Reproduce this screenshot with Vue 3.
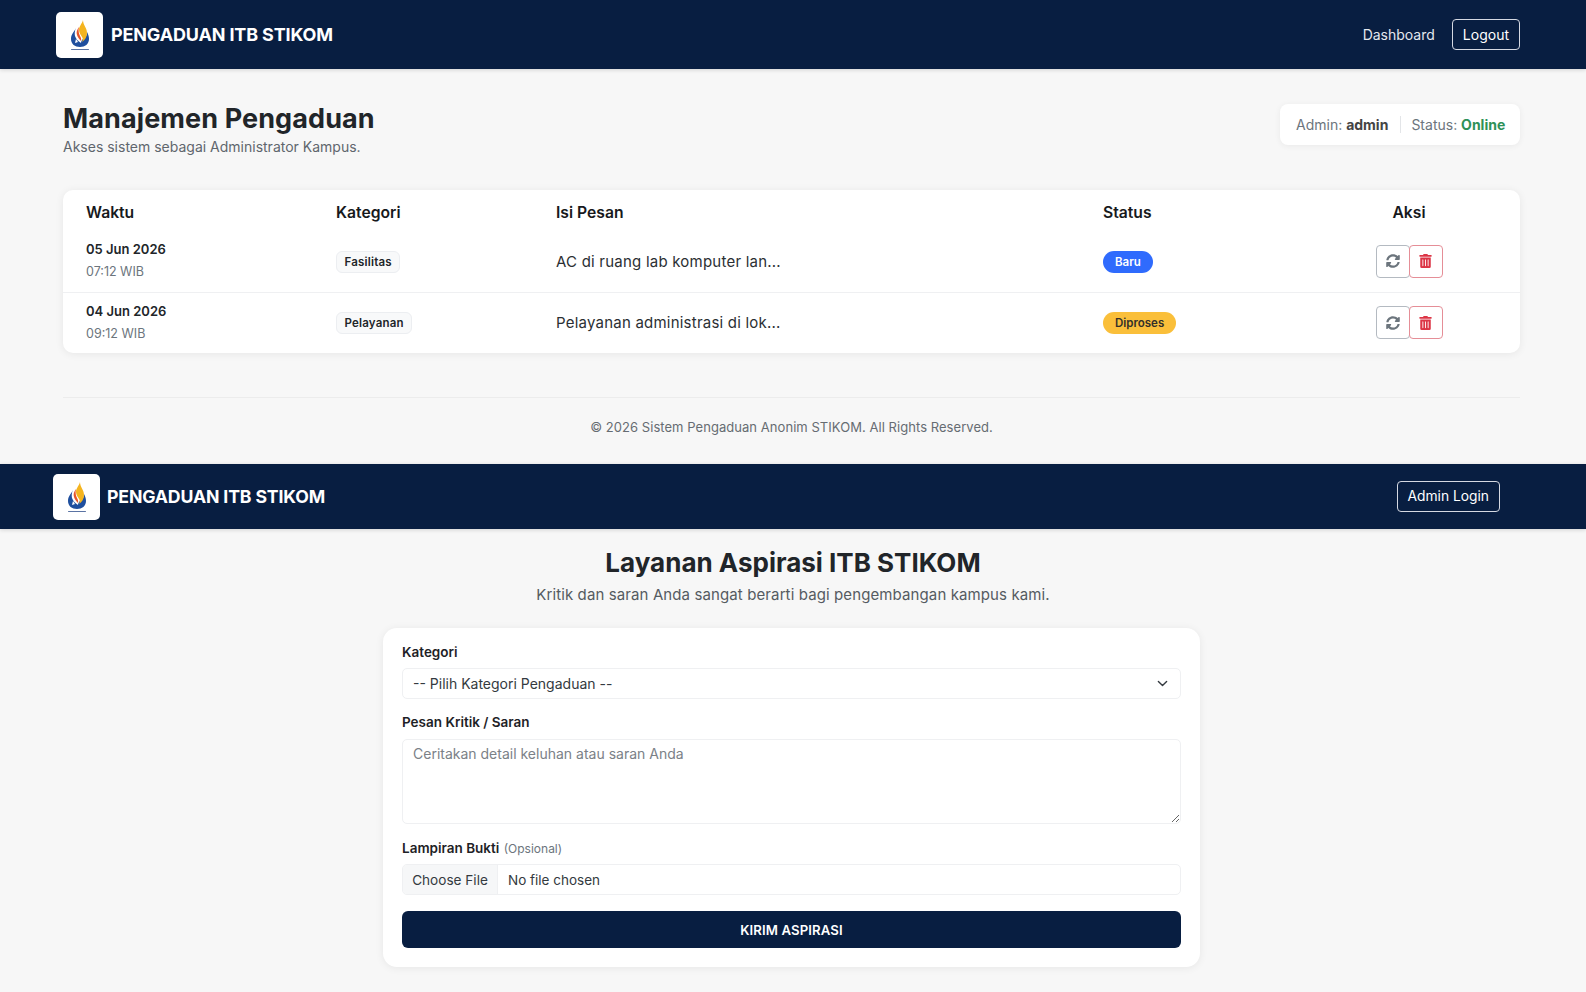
<script setup>
const rows = [
  { date: '05 Jun 2026', time: '07:12 WIB', cat: 'Fasilitas', msg: 'AC di ruang lab komputer lan...', status: 'Baru', cls: 'baru' },
  { date: '04 Jun 2026', time: '09:12 WIB', cat: 'Pelayanan', msg: 'Pelayanan administrasi di lok...', status: 'Diproses', cls: 'proses' },
]
</script>

<template>
  <div class="app">
    <header class="nav nav-a">
      <div class="brand">
        <span class="logo">
          <svg viewBox="0 0 24 32" class="flame">
            <path d="M8 9C6 13 3 15 3 20c0 5 4 8 9 8s9-3 9-8c0-3-1-5-2-7 0 3-1 5-3 6-2 2-3 3-3 5-3-2-5-4-6-7-.5-2-.5-5 1-8z" fill="#1f4f9e"/>
            <path d="M15 1c-1 4-4 6-4 10 0 3 2 5 3 7 1 1 1 3 0 5 3-2 5-5 5-9 0-5-4-8-4-13z" fill="#f4b41f"/>
            <path d="M11 8c-2 3-3 5-2 8 .6 2 2 4 4 6 .5-2 0-3-1-5-1-2-2-5-1-9z" fill="#e8562a"/>
            <path d="M8 20l2 3-3 1z" fill="#fff"/>
            <rect x="3" y="30" width="18" height="1" rx=".5" fill="#5a73a3"/>
          </svg>
        </span>
        <span class="brand-text">PENGADUAN ITB STIKOM</span>
      </div>
      <nav class="nav-links">
        <a class="link">Dashboard</a>
        <a class="outline">Logout</a>
      </nav>
    </header>

    <main class="admin">
      <div class="head">
        <div>
          <h1>Manajemen Pengaduan</h1>
          <p>Akses sistem sebagai Administrator Kampus.</p>
        </div>
        <div class="who">
          <span class="who-a">Admin: <b>admin</b></span>
          <span class="who-b">Status: <b class="online">Online</b></span>
        </div>
      </div>

      <div class="card table-card">
        <table>
          <thead>
            <tr>
              <th class="c1">Waktu</th>
              <th class="c2">Kategori</th>
              <th class="c3">Isi Pesan</th>
              <th class="c4">Status</th>
              <th class="c5">Aksi</th>
            </tr>
          </thead>
          <tbody>
            <tr v-for="r in rows" :key="r.date">
              <td>
                <div class="date">{{ r.date }}</div>
                <div class="time">{{ r.time }}</div>
              </td>
              <td><span class="tag">{{ r.cat }}</span></td>
              <td class="msg">{{ r.msg }}</td>
              <td><span class="pill" :class="r.cls">{{ r.status }}</span></td>
              <td>
                <div class="actions">
                  <button class="act grey" aria-label="Ubah status">
                    <svg viewBox="0 0 512 512" width="14" height="14"><path fill="#6c757d" d="M370.700 133.300C339.500 104 298.900 88 255.800 88c-77.500.1-144.300 53.200-162.800 126.900-1.300 5.400-6.100 9.100-11.600 9.100H24.100c-7.500 0-13.200-6.800-11.800-14.200C33.900 94.900 134.800 8 256 8c66.400 0 126.800 26.100 171.300 68.700L463 41c15.100-15.100 41-4.400 41 17v134c0 13.300-10.700 24-24 24H346c-21.400 0-32.100-25.900-17-41l41.700-41.700zM32 296h134c21.400 0 32.100 25.900 17 41l-41.700 41.700c31.200 29.300 71.800 45.300 114.900 45.300 77.400-.1 144.300-53.100 162.800-126.800 1.300-5.400 6.100-9.100 11.600-9.100h57.300c7.500 0 13.200 6.800 11.800 14.200C478.100 417.100 377.200 504 256 504c-66.400 0-126.800-26.100-171.300-68.700L49 471c-15.100 15.100-41 4.400-41-17V320c0-13.300 10.700-24 24-24z"/></svg>
                  </button>
                  <button class="act red" aria-label="Hapus">
                    <svg viewBox="0 0 448 512" width="13" height="14"><path fill="#dc3545" d="M32 464a48 48 0 0 0 48 48h288a48 48 0 0 0 48-48V128H32zm272-256a16 16 0 0 1 32 0v224a16 16 0 0 1-32 0zm-96 0a16 16 0 0 1 32 0v224a16 16 0 0 1-32 0zm-96 0a16 16 0 0 1 32 0v224a16 16 0 0 1-32 0zM432 32H312l-9.400-18.700A24 24 0 0 0 281.100 0H166.800a23.700 23.700 0 0 0-21.400 13.300L136 32H16A16 16 0 0 0 0 48v32a16 16 0 0 0 16 16h416a16 16 0 0 0 16-16V48a16 16 0 0 0-16-16z"/></svg>
                  </button>
                </div>
              </td>
            </tr>
          </tbody>
        </table>
      </div>

      <footer class="foot">© 2026 Sistem Pengaduan Anonim STIKOM. All Rights Reserved.</footer>
    </main>

    <header class="nav nav-b">
      <div class="brand">
        <span class="logo">
          <svg viewBox="0 0 24 32" class="flame">
            <path d="M8 9C6 13 3 15 3 20c0 5 4 8 9 8s9-3 9-8c0-3-1-5-2-7 0 3-1 5-3 6-2 2-3 3-3 5-3-2-5-4-6-7-.5-2-.5-5 1-8z" fill="#1f4f9e"/>
            <path d="M15 1c-1 4-4 6-4 10 0 3 2 5 3 7 1 1 1 3 0 5 3-2 5-5 5-9 0-5-4-8-4-13z" fill="#f4b41f"/>
            <path d="M11 8c-2 3-3 5-2 8 .6 2 2 4 4 6 .5-2 0-3-1-5-1-2-2-5-1-9z" fill="#e8562a"/>
            <path d="M8 20l2 3-3 1z" fill="#fff"/>
            <rect x="3" y="30" width="18" height="1" rx=".5" fill="#5a73a3"/>
          </svg>
        </span>
        <span class="brand-text">PENGADUAN ITB STIKOM</span>
      </div>
      <a class="outline login">Admin Login</a>
    </header>

    <section class="public">
      <h2>Layanan Aspirasi ITB STIKOM</h2>
      <p class="sub">Kritik dan saran Anda sangat berarti bagi pengembangan kampus kami.</p>
      <form class="card form" @submit.prevent>
        <label class="lbl">Kategori</label>
        <select class="ctl select">
          <option>-- Pilih Kategori Pengaduan --</option>
        </select>
        <label class="lbl">Pesan Kritik / Saran</label>
        <textarea class="ctl area" placeholder="Ceritakan detail keluhan atau saran Anda"></textarea>
        <label class="lbl">Lampiran Bukti <small>(Opsional)</small></label>
        <input class="ctl file" type="file" />
        <button class="submit" type="submit">KIRIM ASPIRASI</button>
      </form>
    </section>
  </div>
</template>

<style>
html, body { background: #f7f7f7; }
</style>

<style scoped>
.app {
  font-family: Inter, "Open Sans", sans-serif;
  color: #212529;
  background: #f7f7f7;
  min-height: 992px;
}
.nav {
  display: flex;
  align-items: center;
  justify-content: space-between;
  background: #081e41;
  box-shadow: 0 1px 4px rgba(0, 0, 0, .15);
}
.nav-a { height: 69px; padding: 0 66px 0 56px; }
.nav-b { height: 65px; padding: 0 86px 0 53px; }
.brand { display: flex; align-items: center; gap: 8px; }
.nav-b .brand { gap: 7px; }
.logo {
  width: 47px;
  height: 46px;
  background: #fff;
  border-radius: 5px;
  display: flex;
  align-items: center;
  justify-content: center;
}
.flame { width: 24px; height: 32px; }
.brand-text { color: #fff; font-size: 18px; font-weight: 700; letter-spacing: -.15px; }
.nav-b .brand-text { font-size: 17.700px; }
.nav-links { display: flex; align-items: center; gap: 17px; }
.link { color: #e4e7ee; font-size: 14px; }
.outline {
  display: block;
  color: #fff;
  font-size: 14px;
  line-height: 29px;
  padding: 0 10px;
  border: 1px solid #d5d9e2;
  border-radius: 4px;
}
.login { font-size: 13.800px; }

.admin { padding: 35px 66px 0 63px; height: 395px; box-sizing: border-box; }
.head { display: flex; justify-content: space-between; align-items: flex-start; height: 86px; }
h1 { margin: 0; font-size: 27px; line-height: 30px; font-weight: 700; color: #212529; letter-spacing: .1px; }
.head p { margin: 4px 0 0; font-size: 14px; color: #5f666d; }
.who {
  display: flex;
  align-items: center;
  width: 240px;
  height: 41px;
  box-sizing: border-box;
  padding: 0 16px;
  background: #fff;
  border-radius: 8px;
  box-shadow: 0 1px 6px rgba(0, 0, 0, .06);
  font-size: 14px;
  color: #6c757d;
}
.who b { font-weight: 700; color: #444; }
.who .online { color: #2e9158; }
.who-a { padding-right: 12px; border-right: 1px solid #e3e5e8; line-height: 17px; white-space: nowrap; }
.who-b { padding-left: 10px; white-space: nowrap; }

.card { background: #fff; box-shadow: 0 1px 8px rgba(0, 0, 0, .07); }
.table-card { border-radius: 10px; overflow: hidden; height: 163px; }
table { width: 100%; border-collapse: collapse; table-layout: fixed; }
th {
  height: 41px;
  padding: 4px 23px 0;
  box-sizing: border-box;
  font-size: 15.700px;
  font-weight: 600;
  text-align: left;
  color: #17191c;
}
.c1 { width: 250px; }
.c2 { width: 220px; }
.c3 { width: 547px; }
.c4 { width: 218px; }
th.c5 { text-align: center; }
td { height: 61px; padding: 0 23px; box-sizing: border-box; vertical-align: middle; }
tbody tr + tr { border-top: 1px solid #eff0f2; }
.date { font-size: 13px; font-weight: 600; line-height: 22px; color: #212529; }
.time { font-size: 12.500px; line-height: 24px; color: #6c757d; }
.tag {
  display: inline-block;
  padding: 0 7.500px;
  line-height: 20px;
  font-size: 11.500px;
  font-weight: 600;
  letter-spacing: .2px;
  background: #f8f9fa;
  border: 1px solid #eceef1;
  border-radius: 6px;
  color: #212529;
}
.msg { font-size: 15px; color: #2b2f33; letter-spacing: .22px; }
.pill {
  display: inline-block;
  padding: 0 12px;
  line-height: 22px;
  font-size: 11.500px;
  font-weight: 600;
  border-radius: 11px;
}
.baru { background: #2f6bfd; color: #fff; }
.proses { background: #fabf3a; color: #33302a; }
.actions { display: flex; justify-content: center; }
.act {
  width: 34px;
  height: 33px;
  padding: 0;
  background: #fff;
  display: flex;
  align-items: center;
  justify-content: center;
  border-radius: 4px;
  border: 1px solid #b4bac1;
}
.act.red { border-color: #e58e97; margin-left: -1px; }

.foot {
  margin-top: 44px;
  border-top: 1px solid #ececec;
  padding-top: 21px;
  text-align: center;
  font-size: 13px;
  letter-spacing: .05px;
  color: #666c72;
}

.public { display: flex; flex-direction: column; align-items: center; }
h2 { margin: 17px 0 0; font-size: 26px; line-height: 34px; font-weight: 700; color: #212529; }
.sub { margin: 4px 0 0; font-size: 15px; line-height: 22px; color: #555b61; letter-spacing: .11px; }
.form {
  margin: 22px 3px 0 0;
  width: 817px;
  height: 339px;
  box-sizing: border-box;
  padding: 14px 19px 0;
  border-radius: 14px;
  display: flex;
  flex-direction: column;
}
.lbl { font-size: 13.500px; font-weight: 600; line-height: 20px; color: #1e2226; height: 20px; }
.lbl small { font-size: 12px; font-weight: 400; color: #6c757d; margin-left: 1px; }
.ctl {
  box-sizing: border-box;
  width: 100%;
  font-family: inherit;
  font-size: 14px;
  color: #343a40;
  background-color: #fff;
  border: 1px solid #eff0f2;
  border-radius: 5px;
  outline: none;
}
.select {
  appearance: none;
  height: 31px;
  margin: 6px 0 13px;
  padding: 0 10px;
  background-image: url("data:image/svg+xml,%3csvg xmlns='http://www.w3.org/2000/svg' viewBox='0 0 16 16'%3e%3cpath fill='none' stroke='%23343a40' stroke-linecap='round' stroke-linejoin='round' stroke-width='2' d='M2 5l6 6 6-6'/%3e%3c/svg%3e");
  background-repeat: no-repeat;
  background-position: right 12px center;
  background-size: 11px 11px;
}
.area {
  display: block;
  height: 85px;
  margin: 7px 0 14px;
  padding: 5px 10px;
  resize: vertical;
}
.area::placeholder { color: #7b8187; opacity: 1; }
.file {
  display: block;
  height: 31px;
  margin: 6px 0 16px;
  padding: 0;
  line-height: 29px;
  font-size: 13.500px;
}
.file::file-selector-button {
  height: 29px;
  width: 95px;
  margin: 0 10px 0 0;
  padding: 0;
  border: 0;
  border-right: 1px solid #eff0f2;
  background: #f6f7f8;
  color: #343a40;
  font-family: inherit;
  font-size: 13.600px;
}
.submit {
  height: 37px;
  border: 0;
  border-radius: 6px;
  background: #081e41;
  color: #fff;
  font-family: inherit;
  font-size: 13.200px;
  font-weight: 600;
  letter-spacing: .1px;
}
</style>
